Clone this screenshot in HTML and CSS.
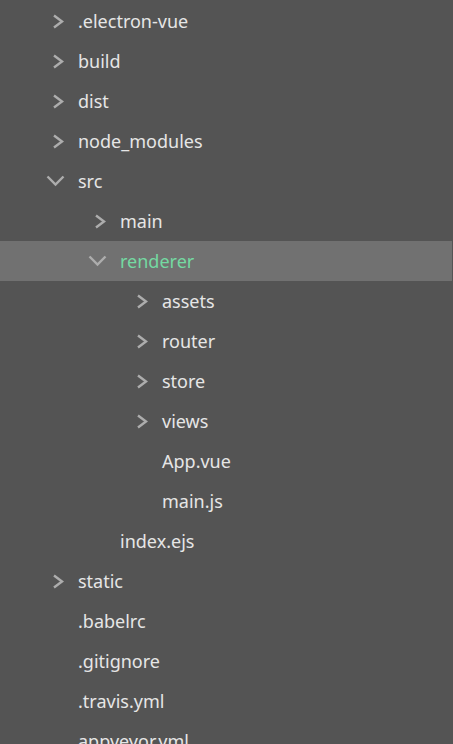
FILE: index.html
```html
<!DOCTYPE html>
<html lang="en">
<head>
    <meta charset="UTF-8">
    <meta name="viewport" content="width=device-width, initial-scale=1.0">
    <title>Explorer</title>
    <link rel="stylesheet" href="styles.css">
</head>
<body>

    <!-- File tree -->
    <div class="tree">
        <div class="row lvl-0"><span class="icon"><svg class="chev-right" viewBox="0 0 12 15"><path d="M2 1.5 L10 7.5 L2 13.5"/></svg></span><span class="name">.electron-vue</span></div>
        <div class="row lvl-0"><span class="icon"><svg class="chev-right" viewBox="0 0 12 15"><path d="M2 1.5 L10 7.5 L2 13.5"/></svg></span><span class="name">build</span></div>
        <div class="row lvl-0"><span class="icon"><svg class="chev-right" viewBox="0 0 12 15"><path d="M2 1.5 L10 7.5 L2 13.5"/></svg></span><span class="name">dist</span></div>
        <div class="row lvl-0"><span class="icon"><svg class="chev-right" viewBox="0 0 12 15"><path d="M2 1.5 L10 7.5 L2 13.5"/></svg></span><span class="name">node_modules</span></div>
        <div class="row lvl-0"><span class="icon"><svg class="chev-down" viewBox="0 0 19 12"><path d="M1.5 1.5 L9.5 9.5 L17.5 1.5"/></svg></span><span class="name">src</span></div>
        <div class="row lvl-1"><span class="icon"><svg class="chev-right" viewBox="0 0 12 15"><path d="M2 1.5 L10 7.5 L2 13.5"/></svg></span><span class="name">main</span></div>
        <div class="row lvl-1 active"><span class="icon"><svg class="chev-down" viewBox="0 0 19 12"><path d="M1.5 1.5 L9.5 9.5 L17.5 1.5"/></svg></span><span class="name">renderer</span></div>
        <div class="row lvl-2"><span class="icon"><svg class="chev-right" viewBox="0 0 12 15"><path d="M2 1.5 L10 7.5 L2 13.5"/></svg></span><span class="name">assets</span></div>
        <div class="row lvl-2"><span class="icon"><svg class="chev-right" viewBox="0 0 12 15"><path d="M2 1.5 L10 7.5 L2 13.5"/></svg></span><span class="name">router</span></div>
        <div class="row lvl-2"><span class="icon"><svg class="chev-right" viewBox="0 0 12 15"><path d="M2 1.5 L10 7.5 L2 13.5"/></svg></span><span class="name">store</span></div>
        <div class="row lvl-2"><span class="icon"><svg class="chev-right" viewBox="0 0 12 15"><path d="M2 1.5 L10 7.5 L2 13.5"/></svg></span><span class="name">views</span></div>
        <div class="row lvl-2"><span class="icon"></span><span class="name">App.vue</span></div>
        <div class="row lvl-2"><span class="icon"></span><span class="name">main.js</span></div>
        <div class="row lvl-1"><span class="icon"></span><span class="name">index.ejs</span></div>
        <div class="row lvl-0"><span class="icon"><svg class="chev-right" viewBox="0 0 12 15"><path d="M2 1.5 L10 7.5 L2 13.5"/></svg></span><span class="name">static</span></div>
        <div class="row lvl-0"><span class="icon"></span><span class="name">.babelrc</span></div>
        <div class="row lvl-0"><span class="icon"></span><span class="name">.gitignore</span></div>
        <div class="row lvl-0"><span class="icon"></span><span class="name">.travis.yml</span></div>
        <div class="row lvl-0"><span class="icon"></span><span class="name">appveyor.yml</span></div>
    </div>

</body>
</html>
```

FILE: styles.css
```css
* {
    box-sizing: border-box;
    margin: 0;
    padding: 0;
}
body {
    font-family: "Noto Sans", "Open Sans", sans-serif;
    background-color: #545454;
    height: 744px;
    overflow: hidden;
}
.tree {
    padding-top: 1px;
    margin-right: 1px;
}
.row {
    display: flex;
    align-items: center;
    height: 40px;
    color: #e6e6e6;
    font-size: 18px;
    white-space: nowrap;
}
.lvl-0 {
    padding-left: 46px;
}
.lvl-1 {
    padding-left: 88px;
}
.lvl-2 {
    padding-left: 130px;
}
.row.active {
    background-color: #717171;
}
.row.active .name {
    color: #74d9a2;
}
.icon {
    width: 32px;
    display: flex;
    align-items: center;
}
.icon svg {
    fill: none;
    stroke: #adadad;
    stroke-width: 2.4;
}
.chev-right {
    width: 12px;
    height: 15px;
    margin-left: 6px;
}
.chev-down {
    width: 19px;
    height: 12px;
}
.name {
    line-height: 40px;
}
```
